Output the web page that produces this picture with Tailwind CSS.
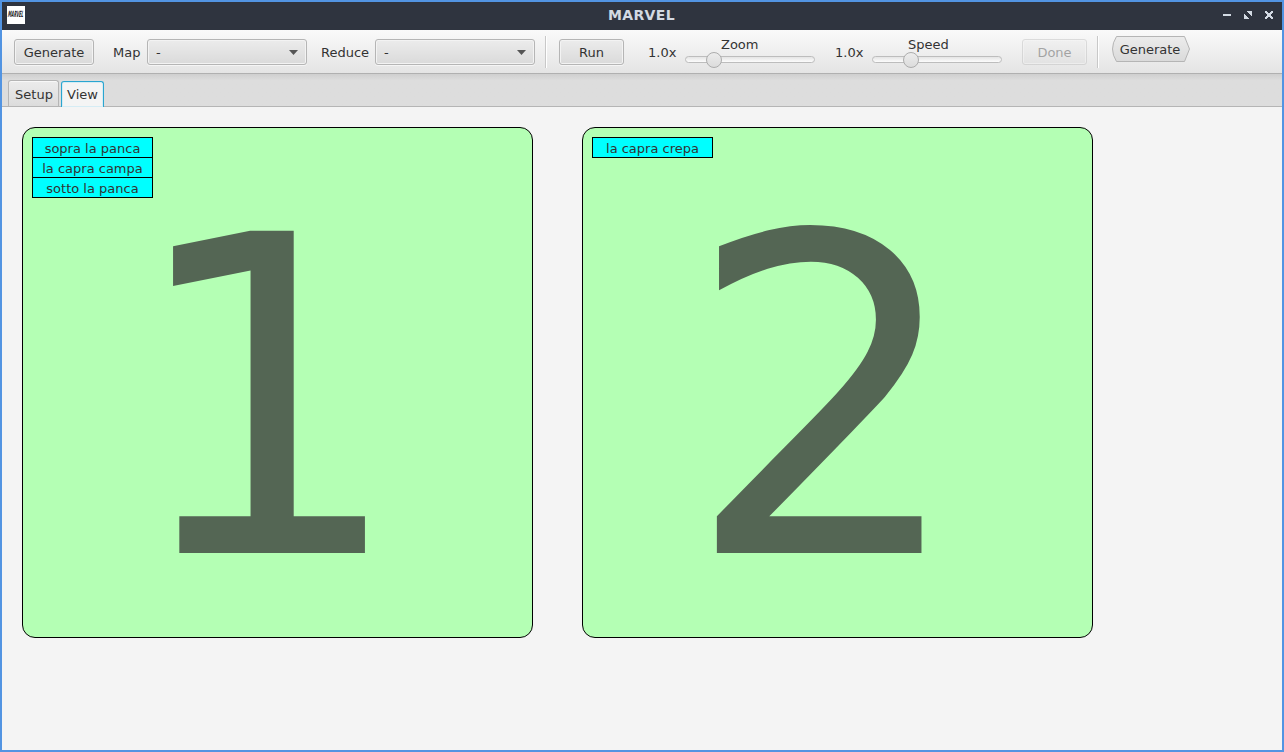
<!DOCTYPE html>
<html lang="en">
<head>
<meta charset="utf-8">
<title>MARVEL</title>
<script src="https://cdn.jsdelivr.net/npm/@tailwindcss/browser@4"></script>
</head>
<body class="w-[1284px] h-[752px] overflow-hidden border-2 border-[#5294e2] bg-[#f4f4f4] flex flex-col text-[13px] leading-[16px] text-[#333] font-['DejaVu_Sans',sans-serif]">
  <header class="h-7 shrink-0 bg-[#2f343f] flex items-start">
    <svg class="ml-[5px] mt-1 size-[18px] shrink-0" viewBox="0 0 18 18"><rect width="18" height="18" fill="#fff"/><text x="2.8" y="11" transform="skewX(-12)" font-family="DejaVu Sans" font-weight="bold" font-size="8.500" textLength="15.5" lengthAdjust="spacingAndGlyphs" fill="#222">MARVEL</text></svg>
    <h1 class="ml-9 mt-[5px] flex-1 text-center text-[14px] leading-[16px] tracking-[0.35px] font-bold text-[#d3dae3]">MARVEL</h1>
    <svg class="w-[60px] h-7 shrink-0" viewBox="1222 2 60 28" fill="#d3dae3" shape-rendering="crispEdges"><path d="M1223 14h8v2h-8z"/><path d="M1247 11h5v5h-1v-1h-1v-1h-1v-1h-1v-1h-1zM1244 14h1v1h1v1h1v1h1v1h1v1h-5z"/><path d="M1265 11h2v1h1v1h2v-1h1v-1h2v2h-1v1h-1v2h1v1h1v2h-2v-1h-1v-1h-2v1h-1v1h-2v-2h1v-1h1v-2h-1v-1h-1z"/></svg>
  </header>

  <div class="h-11 shrink-0 border-b border-[#b0b0b0] bg-linear-to-b from-[#fafafa] to-[#e4e4e4] flex items-start pl-3 whitespace-nowrap">
    <button class="mt-[9px] w-20 h-[26px] pt-0.5 shrink-0 rounded-[3px] border border-[#b5b5b5] bg-linear-to-b from-[#ececec] to-[#dadada] inset-shadow-[0_0_0_1px_#f3f3f3] shadow-[0_1px_0_#f5f5f5]">Generate</button>
    <label class="ml-[19px] mt-[15px] w-[34px] shrink-0">Map</label>
    <div class="mt-[9px] w-40 h-[26px] shrink-0 rounded-[3px] border border-[#b5b5b5] bg-linear-to-b from-[#ececec] to-[#dadada] inset-shadow-[0_0_0_1px_#f3f3f3] shadow-[0_1px_0_#f5f5f5] flex items-center justify-between pl-2 pr-2"><span class="pt-0.5">-</span><svg class="w-[9px] h-[5px]" viewBox="0 0 9 5"><path d="M0 0h9L4.5 5z" fill="#555"/></svg></div>
    <label class="ml-[14px] mt-[15px] w-[54px] shrink-0">Reduce</label>
    <div class="mt-[9px] w-40 h-[26px] shrink-0 rounded-[3px] border border-[#b5b5b5] bg-linear-to-b from-[#ececec] to-[#dadada] inset-shadow-[0_0_0_1px_#f3f3f3] shadow-[0_1px_0_#f5f5f5] flex items-center justify-between pl-2 pr-2"><span class="pt-0.5">-</span><svg class="w-[9px] h-[5px]" viewBox="0 0 9 5"><path d="M0 0h9L4.5 5z" fill="#555"/></svg></div>
    <div class="ml-[10px] mt-[6px] w-0.5 h-8 shrink-0 border-l border-[#c8c8c8] bg-white"></div>
    <button class="ml-3 mt-[9px] w-[65px] h-[26px] pt-0.5 shrink-0 rounded-[3px] border border-[#b5b5b5] bg-linear-to-b from-[#ececec] to-[#dadada] inset-shadow-[0_0_0_1px_#f3f3f3] shadow-[0_1px_0_#f5f5f5]">Run</button>
    <span class="ml-6 mt-[15px] w-[37px] shrink-0">1.0x</span>
    <div class="w-[130px] shrink-0 flex flex-col">
      <span class="mt-[7px] ml-9">Zoom</span>
      <div class="relative mt-[3px] h-[7px] rounded-full border border-[#bdbdbd] bg-linear-to-b from-[#e5e5e5] to-[#fcfcfc]"><div class="absolute left-[20px] -top-[5px] size-4 rounded-full border border-[#acacac] bg-linear-to-b from-[#ececec] to-[#dcdcdc]"></div></div>
    </div>
    <span class="ml-5 mt-[15px] w-[37px] shrink-0">1.0x</span>
    <div class="w-[130px] shrink-0 flex flex-col">
      <span class="mt-[7px] ml-9">Speed</span>
      <div class="relative mt-[3px] h-[7px] rounded-full border border-[#bdbdbd] bg-linear-to-b from-[#e5e5e5] to-[#fcfcfc]"><div class="absolute left-[30px] -top-[5px] size-4 rounded-full border border-[#acacac] bg-linear-to-b from-[#ececec] to-[#dcdcdc]"></div></div>
    </div>
    <button disabled class="ml-5 mt-[9px] w-[65px] h-[26px] pt-0.5 shrink-0 rounded-[3px] border border-[#b5b5b5] bg-linear-to-b from-[#ececec] to-[#dadada] inset-shadow-[0_0_0_1px_#f3f3f3] opacity-40">Done</button>
    <div class="ml-[10px] mt-[6px] w-0.5 h-8 shrink-0 border-l border-[#c8c8c8] bg-white"></div>
    <button class="ml-[13px] mt-[6px] w-[78px] h-[26px] shrink-0 grid place-items-center">
      <svg class="col-start-1 row-start-1 w-[78px] h-[26px]" viewBox="0 0 78 26"><defs><linearGradient id="g" x2="0" y2="1"><stop stop-color="#ececec"/><stop offset="1" stop-color="#dadada"/></linearGradient></defs><path d="M4.500.5H72.500L77.500 13L72.500 25.500H4.500Q-3.500 13 4.500.5z" fill="url(#g)" stroke="#b5b5b5"/></svg>
      <span class="col-start-1 row-start-1 pt-0.5 pr-0.5">Generate</span>
    </button>
  </div>

  <nav class="h-[33px] shrink-0 border-b border-[#b5b5b5] bg-linear-to-b from-[#cfcfcf] via-[#dddddd] via-20% to-[#dddddd] flex items-end pl-[6px]">
    <div class="w-[51px] h-[26px] rounded-t-[3px] border border-b-0 border-[#b5b5b5] bg-linear-to-b from-[#ececec] to-[#dcdcdc] inset-shadow-[0_1px_0_#f8f8f8] pt-[6px] pl-px text-center">Setup</div>
    <div class="ml-[2px] w-[43px] h-[26px] -mb-px rounded-t-[3px] border border-b-0 border-[#2aa5d0] bg-[#f4f4f4] inset-shadow-[0_0_0_1px_#d5ecf4] pt-[5px] text-center">View</div>
  </nav>

  <main class="flex-1 pl-5 pt-5 flex items-start gap-[49px]">
    <section class="w-[511px] h-[511px] shrink-0 rounded-[13px] border border-black bg-[#b4ffb4] grid">
      <ul class="col-start-1 row-start-1 w-[121px] ml-[9px] mt-[9px] text-center self-start">
        <li class="h-[21px] border border-black bg-[#00ffff] pt-[3px]">sopra la panca</li>
        <li class="h-[21px] -mt-px border border-black bg-[#00ffff] pt-[3px]">la capra campa</li>
        <li class="h-[21px] -mt-px border border-black bg-[#00ffff] pt-[3px]">sotto la panca</li>
      </ul>
      <div class="col-start-1 row-start-1 h-[509px] pl-[101.5px] pt-[47px] text-[442px] leading-[450px] text-[#546654]">1</div>
    </section>
    <section class="w-[511px] h-[511px] shrink-0 rounded-[13px] border border-black bg-[#b4ffb4] grid">
      <ul class="col-start-1 row-start-1 w-[121px] ml-[9px] mt-[9px] text-center self-start">
        <li class="h-[21px] border border-black bg-[#00ffff] pt-[3px]">la capra crepa</li>
      </ul>
      <div class="col-start-1 row-start-1 h-[509px] pl-[101.5px] pt-[47px] text-[442px] leading-[450px] text-[#546654]">2</div>
    </section>
  </main>
</body>
</html>
